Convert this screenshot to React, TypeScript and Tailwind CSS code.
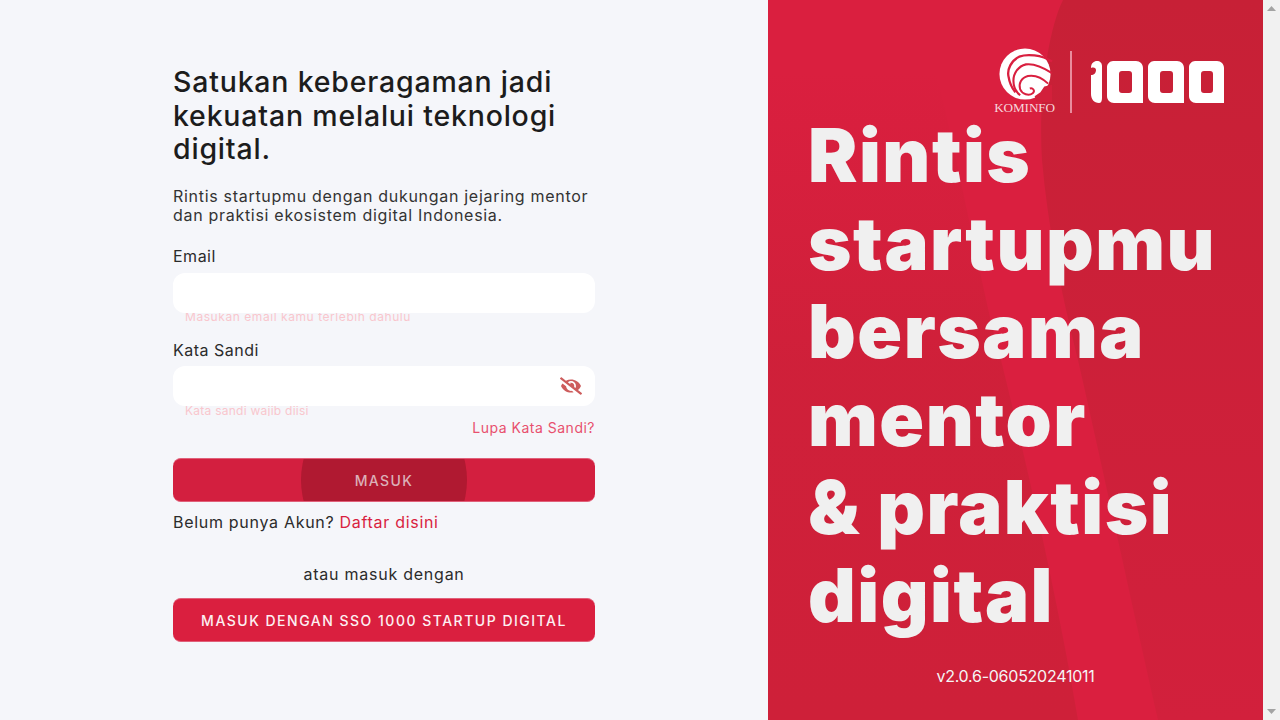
import { FaEyeSlash } from 'react-icons/fa'

const fontStack = "font-['Inter','Noto_Sans',sans-serif]"

const Kominfo = () => (
  <div className="flex flex-col items-center">
    <svg viewBox="0 0 56 56" className="h-[54px] w-[56px]">
      <circle cx="28" cy="27" r="26.500" fill="#fff" />
      <path d="M56 14C45 7 30 6 22 9C14 13 9 22 11 30C12 37 14 41 18 46" fill="none" stroke="#d91f3f" strokeWidth="2.400" />
      <path d="M56 26C45 19 36 16 29 17C21 19 16 26 16 34C16 41 18 45 23 49" fill="none" stroke="#d91f3f" strokeWidth="2.200" />
      <path d="M52 37C45 30 37 28 31 29C24 31 21 37 23 43C25 48 32 50 36 47C39 44 36 41 33 42" fill="none" stroke="#d91f3f" strokeWidth="2" />
      <path d="M56 38L48 40L44 46L38 50L40 56H56Z" fill="#d3203b" />
    </svg>
    <span className="-mt-[1px] font-['Liberation_Serif',serif] text-[13.200px] leading-[14px] tracking-[-0.1px] text-[#f6d5da]">KOMINFO</span>
  </div>
)

const Logo1000 = () => (
  <svg viewBox="0 0 134 44" className="h-[44px] w-[134px]">
    <path d="M1 8C1 3 4 1 7 1C10 1 12 3 12 6V38C12 41 11 43 9 43C4 43 1 39 1 34V15C4 15 6 13 6 10C6 8 4 7 1 8Z" fill="#fff" />
    <path fillRule="evenodd" d="M23 1H46C50 1 53 4 53 8V43H24C20 43 17 40 17 36V7C17 4 20 1 23 1ZM32 11C30 11 29 12 29 14V30C29 32 30 33 32 33H39C41 33 42 32 42 30V14C42 12 41 11 39 11Z" fill="#fff" />
    <path fillRule="evenodd" d="M64 1H87C91 1 94 4 94 8V43H65C61 43 58 40 58 36V7C58 4 61 1 64 1ZM73 11C71 11 70 12 70 14V30C70 32 71 33 73 33H80C82 33 83 32 83 30V14C83 12 82 11 80 11Z" fill="#fff" />
    <path fillRule="evenodd" d="M105 1H127C131 1 134 4 134 8V43H106C102 43 99 40 99 36V7C99 4 102 1 105 1ZM114 11C112 11 111 12 111 14V30C111 32 112 33 114 33H120C122 33 123 32 123 30V14C123 12 122 11 120 11Z" fill="#fff" />
  </svg>
)

const Arrow = ({ up }: { up?: boolean }) => (
  <svg viewBox="0 0 9 5" className="h-[5px] w-[9px]">
    <path d={up ? 'M4.500 0L9 5H0Z' : 'M0 0H9L4.500 5Z'} fill="#a3a3a3" />
  </svg>
)

export default function App() {
  return (
    <div className={`flex h-[720px] w-[1280px] overflow-hidden bg-[#f5f6fa] text-[#222] ${fontStack}`}>
      <main className="w-[768px] pl-[173px] pt-[65px]">
        <div className="w-[422px]">
          <h1 className="text-[28.500px] font-medium leading-[33.600px] tracking-[0.8px] text-[#1c1c1c]">
            Satukan keberagaman jadi kekuatan melalui teknologi digital.
          </h1>
          <p className="mt-[21px] text-[16px] leading-[19.200px] tracking-[0.7px] text-[#333]">
            Rintis startupmu dengan dukungan jejaring mentor dan praktisi ekosistem digital Indonesia.
          </p>

          <label className="mt-[21px] block text-[16px] leading-[20px] tracking-[0.5px] text-[#2b2b2b]">Email</label>
          <div className="mt-[7px] h-[40px] rounded-xl bg-white" />
          <div className="h-[10px] overflow-hidden pl-[12px]">
            <p className="-mt-[4px] text-[12px] leading-[15px] tracking-[0.56px] text-[#f9c6cd]">Masukan email kamu terlebih dahulu</p>
          </div>

          <label className="mt-[17px] block text-[16px] leading-[20px] tracking-[0.5px] text-[#2b2b2b]">Kata Sandi</label>
          <div className="mt-[6px] flex h-[40px] items-center justify-end rounded-xl bg-white pr-[13px]">
            <FaEyeSlash className="h-[18px] w-[22px] text-[#cd5c5c]" />
          </div>
          <div className="h-[10px] overflow-hidden pl-[12px]">
            <p className="-mt-[3px] text-[12px] leading-[15px] tracking-[0.25px] text-[#f9c6cd]">Kata sandi wajib diisi</p>
          </div>

          <p className="mt-[2px] text-right text-[14px] leading-[20px] tracking-[0.5px] text-[#e8506e]">Lupa Kata Sandi?</p>

          <button className="relative mt-[20px] block h-[44px] w-full overflow-hidden rounded-lg border-y border-[#e0607a] bg-[#d31f3f] text-[14px] font-medium tracking-[1.400px] text-[#dcb0b8]">
            <span className="absolute left-[128px] top-[-62px] h-[166px] w-[166px] rounded-full bg-[#b01931]" />
            <span className="relative">MASUK</span>
          </button>

          <p className="mt-[10px] text-[16px] leading-[20px] tracking-[0.7px] text-[#2b2b2b]">
            Belum punya Akun? <span className="text-[#d91f3f]">Daftar disini</span>
          </p>

          <p className="mt-[32px] text-center text-[16px] leading-[20px] tracking-[0.76px] text-[#2b2b2b]">atau masuk dengan</p>

          <button className="mt-[14px] block h-[44px] w-full rounded-lg border-y border-[#e0607a] bg-[#da1f3f] text-[14px] font-medium tracking-[1.500px] text-[#fdf0f2]">
            MASUK DENGAN SSO 1000 STARTUP DIGITAL
          </button>
        </div>
      </main>

      <aside className="relative w-[495px] overflow-hidden bg-[#da1f3f]">
        <svg viewBox="0 0 495 720" className="absolute inset-0 h-full w-full">
          <defs>
            <linearGradient id="left-band" x1="0" y1="0" x2="0" y2="1">
              <stop offset="0.1" stopColor="#ce2039" stopOpacity="0" />
              <stop offset="0.5" stopColor="#ce2039" stopOpacity="0.9" />
              <stop offset="1" stopColor="#ce2039" />
            </linearGradient>
            <linearGradient id="right-band" x1="0" y1="0" x2="0" y2="1">
              <stop offset="0" stopColor="#c72036" />
              <stop offset="1" stopColor="#d2203c" />
            </linearGradient>
          </defs>
          <path d="M0 0H150C190 150 215 300 233 360C270 510 295 630 310 720H0Z" fill="url(#left-band)" />
          <path d="M295 0C280 30 270 100 274 160C280 230 295 300 310 360C335 470 365 610 390 720H495V0Z" fill="url(#right-band)" />
        </svg>

        <div className="relative flex h-full flex-col">
          <div className="flex items-center justify-end pr-[39px] pt-[48px]">
            <Kominfo />
            <div className="ml-[15px] h-[62px] w-[2px] bg-[#e98c9d]" />
            <div className="ml-[18px]">
              <Logo1000 />
            </div>
          </div>
          <h2 className="-mt-[4px] pl-[40px] text-[74px] font-black leading-[88px] tracking-[1.500px] text-[#f0f0f0]">
            Rintis
            <br />
            startupmu
            <br />
            bersama
            <br />
            mentor
            <br />
            &amp; praktisi
            <br />
            digital
          </h2>
          <p className="mt-[27px] text-center text-[16px] leading-[20px] tracking-[-0.25px] text-[#f5f5f5]">v2.0.6-060520241011</p>
        </div>
      </aside>

      <div className="flex w-[17px] flex-col items-center justify-between bg-[#f1f1f1] py-[6px]">
        <Arrow up />
        <Arrow />
      </div>
    </div>
  )
}
